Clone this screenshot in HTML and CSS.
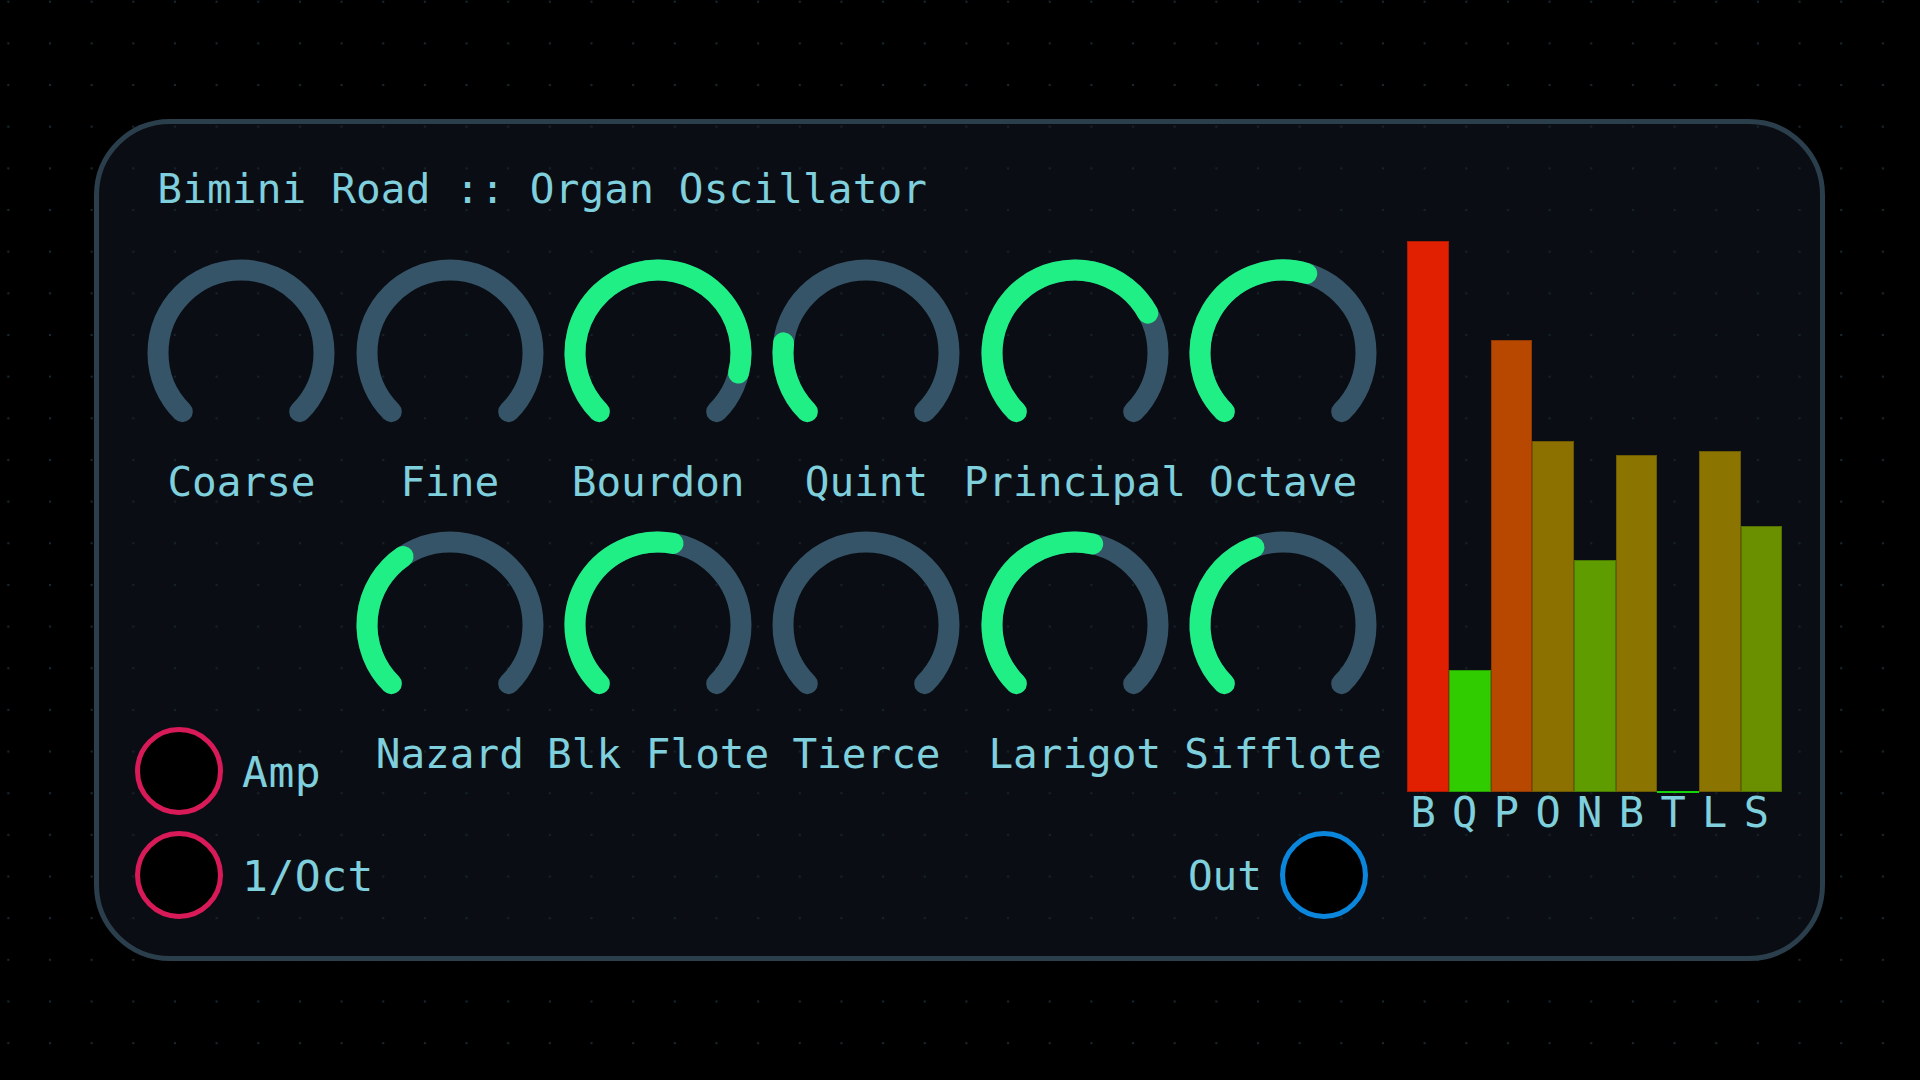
FILE: index.html
```html
<!DOCTYPE html>
<html lang="en">
<head>
<meta charset="utf-8">
<title>Bimini Road :: Organ Oscillator</title>
<link rel="stylesheet" href="styles.css">
</head>
<body>
<div class="panel">
  <div class="left">
    <div class="title">Bimini Road :: Organ Oscillator</div>
    <div class="knob-grid">
      <div class="knob">
        <svg viewBox="0 0 208 200"><path class="track" d="M45.31 158.69 A83 83 0 1 1 162.69 158.69"/></svg>
        <div class="label">Coarse</div>
      </div>
      <div class="knob">
        <svg viewBox="0 0 208 200"><path class="track" d="M45.31 158.69 A83 83 0 1 1 162.69 158.69"/></svg>
        <div class="label">Fine</div>
      </div>
      <div class="knob">
        <svg viewBox="0 0 208 200"><path class="track" d="M45.31 158.69 A83 83 0 1 1 162.69 158.69"/><path class="value" d="M45.31 158.69 A83 83 0 1 1 184.53 120.08"/></svg>
        <div class="label">Bourdon</div>
      </div>
      <div class="knob">
        <svg viewBox="0 0 208 200"><path class="track" d="M45.31 158.69 A83 83 0 1 1 162.69 158.69"/><path class="value" d="M45.31 158.69 A83 83 0 0 1 21.62 89.88"/></svg>
        <div class="label">Quint</div>
      </div>
      <div class="knob">
        <svg viewBox="0 0 208 200"><path class="track" d="M45.31 158.69 A83 83 0 1 1 162.69 158.69"/><path class="value" d="M45.31 158.69 A83 83 0 1 1 176.80 60.14"/></svg>
        <div class="label">Principal</div>
      </div>
      <div class="knob">
        <svg viewBox="0 0 208 200"><path class="track" d="M45.31 158.69 A83 83 0 1 1 162.69 158.69"/><path class="value" d="M45.31 158.69 A83 83 0 0 1 127.71 20.46"/></svg>
        <div class="label">Octave</div>
      </div>

      <div class="jacks">
        <div class="jack-row">
          <div class="jack jack-in"></div>
          <div class="jack-label in-label">Amp</div>
        </div>
        <div class="jack-row">
          <div class="jack jack-in"></div>
          <div class="jack-label in-label">1/Oct</div>
        </div>
      </div>

      <div class="knob">
        <svg viewBox="0 0 208 200"><path class="track" d="M45.31 158.69 A83 83 0 1 1 162.69 158.69"/><path class="value" d="M45.31 158.69 A83 83 0 0 1 57.10 31.52"/></svg>
        <div class="label">Nazard</div>
      </div>
      <div class="knob">
        <svg viewBox="0 0 208 200"><path class="track" d="M45.31 158.69 A83 83 0 1 1 162.69 158.69"/><path class="value" d="M45.31 158.69 A83 83 0 0 1 119.12 18.39"/></svg>
        <div class="label">Blk Flote</div>
      </div>
      <div class="knob">
        <svg viewBox="0 0 208 200"><path class="track" d="M45.31 158.69 A83 83 0 1 1 162.69 158.69"/></svg>
        <div class="label">Tierce</div>
      </div>
      <div class="knob">
        <svg viewBox="0 0 208 200"><path class="track" d="M45.31 158.69 A83 83 0 1 1 162.69 158.69"/><path class="value" d="M45.31 158.69 A83 83 0 0 1 121.68 18.91"/></svg>
        <div class="label">Larigot</div>
      </div>
      <div class="knob">
        <svg viewBox="0 0 208 200"><path class="track" d="M45.31 158.69 A83 83 0 1 1 162.69 158.69"/><path class="value" d="M45.31 158.69 A83 83 0 0 1 74.93 22.25"/></svg>
        <div class="label">Sifflote</div>
      </div>

      <div class="out-row">
        <div class="jack-label">Out</div>
        <div class="jack jack-out"></div>
      </div>
    </div>
  </div>

  <div class="chart">
    <div class="bars">
      <div class="bar" style="height:551px;background:#e02000"></div>
      <div class="bar" style="height:122px;background:#30cc00"></div>
      <div class="bar" style="height:452px;background:#b84800"></div>
      <div class="bar" style="height:351px;background:#8c7000"></div>
      <div class="bar" style="height:232px;background:#5e9c00"></div>
      <div class="bar" style="height:337px;background:#8b7400"></div>
      <div class="bar bar-zero"></div>
      <div class="bar" style="height:341px;background:#8b7400"></div>
      <div class="bar" style="height:266px;background:#6a9000"></div>
    </div>
    <div class="letters">
      <span>B</span><span>Q</span><span>P</span><span>O</span><span>N</span><span>B</span><span>T</span><span>L</span><span>S</span>
    </div>
  </div>
</div>
</body>
</html>
```

FILE: styles.css
```css
html, body {
  margin: 0;
  padding: 0;
}

body {
  width: 1920px;
  height: 1080px;
  overflow: hidden;
  background-color: #000;
  background-image: radial-gradient(circle, #1a2731 0, #1a2731 1px, transparent 1.6px);
  background-size: 41.667px 41.667px;
  background-position: -12.5px -19.1px;
  font-family: "DejaVu Sans Mono", "Liberation Mono", monospace;
  color: #7fcfdd;
  font-size: 41px;
}

.panel {
  box-sizing: border-box;
  margin: 119px 0 0 94px;
  width: 1731px;
  height: 842px;
  border: 5px solid #2b3e4b;
  border-radius: 76px;
  background-color: #0a0e14;
  background-image: radial-gradient(circle, #16222b 0, #16222b 1px, transparent 1.6px);
  background-size: 41.667px 41.667px;
  background-position: -111.5px -143.1px;
  display: flex;
  align-items: flex-start;
}

.left {
  padding: 40.5px 0 0 38.3px;
}

.title {
  margin-left: 20px;
  height: 48px;
  line-height: 48px;
  letter-spacing: 0.15px;
  white-space: nowrap;
}

.knob-grid {
  margin-top: 40.8px;
  display: grid;
  grid-template-columns: repeat(6, 208.33px);
  grid-template-rows: 253px 253px auto;
  row-gap: 18.7px;
}

.knob {
  display: flex;
  flex-direction: column;
  align-items: center;
}

.knob svg {
  display: block;
  width: 208px;
  height: 200px;
}

.track,
.value {
  fill: none;
  stroke-width: 21;
  stroke-linecap: round;
}

.track {
  stroke: #365468;
}

.value {
  stroke: #1fef85;
}

.label {
  margin-top: 5px;
  line-height: 48px;
  white-space: nowrap;
}

.jacks {
  grid-column: 1;
  grid-row: 2 / 4;
  align-self: end;
  margin-left: -2.3px;
  display: flex;
  flex-direction: column;
  gap: 16px;
}

.jack-row {
  display: flex;
  align-items: center;
  gap: 19px;
}

.jack {
  box-sizing: border-box;
  width: 88px;
  height: 88px;
  border-radius: 50%;
  background: #000;
  flex: none;
}

.jack-in {
  border: 5px solid #d81a58;
}

.jack-out {
  border: 5px solid #0a86dc;
}

.jack-label {
  padding-top: 3px;
  line-height: 48px;
  white-space: nowrap;
}

.in-label {
  font-size: 43px;
  letter-spacing: 0.5px;
}

.out-row {
  grid-column: 4 / 7;
  grid-row: 3;
  justify-self: end;
  margin-right: 19.3px;
  padding-top: 34.3px;
  display: flex;
  align-items: center;
  gap: 18px;
}

.chart {
  margin-left: 20px;
  padding-top: 117px;
}

.bars {
  display: flex;
  align-items: flex-end;
  height: 551px;
}

.bar {
  width: 41.67px;
  box-sizing: border-box;
  box-shadow: inset 0 0 0 1px rgba(0, 0, 0, 0.22);
}

.bar-zero {
  height: 2px;
  margin-bottom: -1px;
  background: #16d40c;
  box-shadow: none;
}

.letters {
  display: flex;
  margin-left: -5px;
}

.letters span {
  width: 41.67px;
  text-align: center;
  line-height: 41px;
  font-size: 42px;
}
```
